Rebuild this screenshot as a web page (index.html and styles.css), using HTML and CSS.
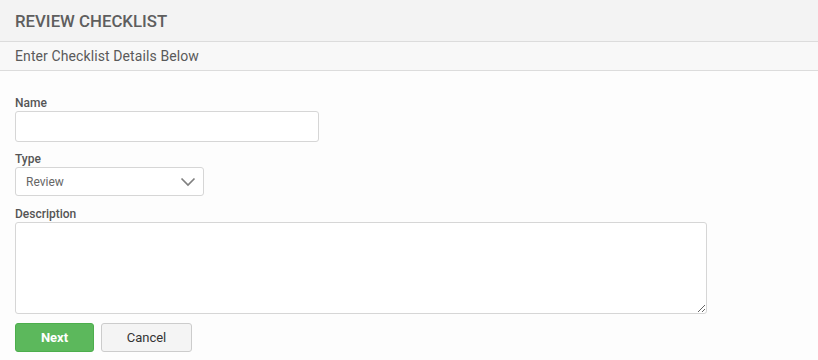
FILE: index.html
```html
<!DOCTYPE html>
<html>
<head>
<meta charset="utf-8">
<link rel="stylesheet" href="styles.css">
</head>
<body>
<div class="page-header"><h1 class="page-title">REVIEW CHECKLIST</h1></div>
<div class="sub-header"><h2 class="sub-title">Enter Checklist Details Below</h2></div>
<form class="form">
  <div class="field">
    <label class="label" for="name">Name</label>
    <input class="input input-name" id="name" type="text">
  </div>
  <div class="field">
    <label class="label" for="type">Type</label>
    <div class="select-wrap">
      <select class="select" id="type"><option>Review</option></select>
      <svg class="chevron" width="16" height="10" viewBox="0 0 16 10"><path d="M1.5 1.5 L8 8 L14.5 1.5" fill="none" stroke="#808080" stroke-width="1.7"/></svg>
    </div>
  </div>
  <div class="field field-desc">
    <label class="label" for="desc">Description</label>
    <textarea class="textarea" id="desc"></textarea>
  </div>
  <div class="actions">
    <button type="button" class="btn btn-next">Next</button>
    <button type="button" class="btn btn-cancel">Cancel</button>
  </div>
</form>
</body>
</html>
```
FILE: styles.css
```css
html, body { margin: 0; padding: 0; }
body {
  background: #fdfdfd;
  font-family: Roboto, "Liberation Sans", sans-serif;
  color: #555;
}
.page-header {
  height: 41px;
  background: #f3f3f3;
  border-bottom: 1px solid #dcdcdc;
  display: flex;
  align-items: center;
  padding-left: 15px;
}
.page-title {
  margin: 0;
  font-size: 16.8px;
  font-weight: 500;
  color: #5e5e5e;
}
.sub-header {
  height: 28px;
  background: #f8f8f8;
  border-bottom: 1px solid #dcdcdc;
  display: flex;
  align-items: center;
  padding-left: 15px;
}
.sub-title {
  margin: 0;
  font-size: 14px;
  font-weight: 400;
  letter-spacing: 0.1px;
  color: #5a5a5a;
}
.form {
  padding: 24px 15px 0;
  display: flex;
  flex-direction: column;
}
.field {
  display: flex;
  flex-direction: column;
  align-items: flex-start;
  margin-bottom: 9px;
}
.field-desc {
  margin-top: 1px;
}
.label {
  font-size: 12px;
  font-weight: 500;
  color: #555;
  line-height: 16px;
}
.input {
  box-sizing: border-box;
  width: 304px;
  height: 31px;
  border: 1px solid #d6d6d6;
  border-radius: 3px;
  background: #fff;
  margin: 0;
}
.select-wrap {
  position: relative;
  width: 189px;
  height: 29px;
}
.select {
  appearance: none;
  -webkit-appearance: none;
  box-sizing: border-box;
  width: 100%;
  height: 100%;
  border: 1px solid #d6d6d6;
  border-radius: 3px;
  background: #fff;
  font-family: Roboto, "Liberation Sans", sans-serif;
  font-size: 12px;
  color: #666;
  padding: 0 10px;
  margin: 0;
}
.chevron {
  position: absolute;
  right: 8px;
  top: 10px;
  pointer-events: none;
}
.textarea {
  box-sizing: border-box;
  width: 692px;
  height: 92px;
  border: 1px solid #d6d6d6;
  border-radius: 3px;
  background: #fff;
  margin: 0;
  resize: both;
}
.actions {
  display: flex;
  gap: 7px;
}
.btn {
  box-sizing: border-box;
  height: 29px;
  border-radius: 3px;
  font-family: Roboto, "Liberation Sans", sans-serif;
  font-size: 13px;
  padding: 0;
  margin: 0;
}
.btn-next {
  width: 79px;
  background: #5cb85c;
  border: 1px solid #4cae4c;
  color: #fff;
  font-weight: 700;
}
.btn-cancel {
  width: 91px;
  background: #f4f4f4;
  border: 1px solid #ccc;
  color: #333;
  font-weight: 400;
}
```
